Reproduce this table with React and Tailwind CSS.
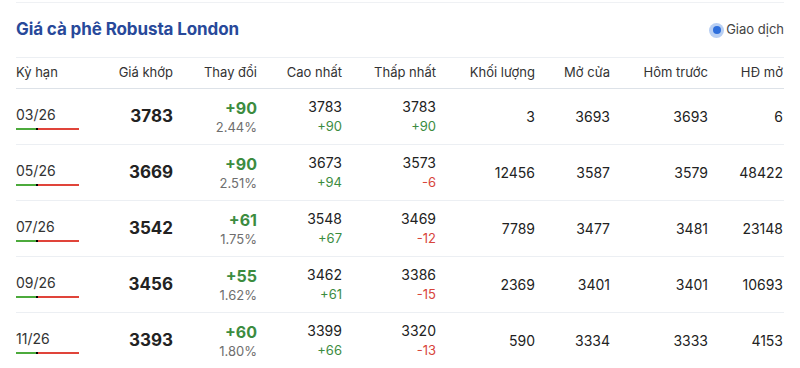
import React from 'react';

const rows = [
  { term: '03/26', price: 3783, chg: '+90', pct: '2.44%', high: 3783, highChg: '+90', low: 3783, lowChg: '+90', vol: 3, open: 3693, prev: 3693, oi: 6 },
  { term: '05/26', price: 3669, chg: '+90', pct: '2.51%', high: 3673, highChg: '+94', low: 3573, lowChg: '-6', vol: 12456, open: 3587, prev: 3579, oi: 48422 },
  { term: '07/26', price: 3542, chg: '+61', pct: '1.75%', high: 3548, highChg: '+67', low: 3469, lowChg: '-12', vol: 7789, open: 3477, prev: 3481, oi: 23148 },
  { term: '09/26', price: 3456, chg: '+55', pct: '1.62%', high: 3462, highChg: '+61', low: 3386, lowChg: '-15', vol: 2369, open: 3401, prev: 3401, oi: 10693 },
  { term: '11/26', price: 3393, chg: '+60', pct: '1.80%', high: 3399, highChg: '+66', low: 3320, lowChg: '-13', vol: 590, open: 3334, prev: 3333, oi: 4153 },
];

const cols = 'grid grid-cols-[84px_73px_84px_85px_94px_99px_75px_98px_75px]';

const SubChange = ({ value }) => (
  <span className={`text-[13px] ${value.startsWith('-') ? 'text-[#d8453b]' : 'text-[#3c8c3f]'}`}>{value}</span>
);

export default function App() {
  return (
    <div className="w-[800px] h-[368px] overflow-hidden bg-white px-4 pt-[2px] text-[#222]" style={{ fontFamily: 'Inter, "Noto Sans", sans-serif' }}>
      <div className="border-t border-[#eff1f4]">
        <div className="flex items-center justify-between h-[54px]">
          <h1 className="text-[17px] font-bold text-[#28499a] tracking-[-0.1px]">Giá cà phê Robusta London</h1>
          <div className="flex items-center gap-[2px] text-[13px] text-[#444]">
            <span className="w-[15px] h-[15px] rounded-full bg-[#b8cff3] flex items-center justify-center">
              <span className="w-[8px] h-[8px] rounded-full bg-[#2e6fdc]"></span>
            </span>
            <span>Giao dịch</span>
          </div>
        </div>

        <div className={`${cols} h-[32px] items-center border-t border-[#eceff3] border-b border-b-[#dde2e8] text-[13px] text-[#333]`}>
          <div>Kỳ hạn</div>
          <div className="text-right">Giá khớp</div>
          <div className="text-right">Thay đổi</div>
          <div className="text-right">Cao nhất</div>
          <div className="text-right">Thấp nhất</div>
          <div className="text-right">Khối lượng</div>
          <div className="text-right">Mở cửa</div>
          <div className="text-right">Hôm trước</div>
          <div className="text-right">HĐ mở</div>
        </div>

        {rows.map((r) => (
          <div key={r.term} className={`${cols} h-[56px] items-center border-b border-[#eceff3] text-[14px]`}>
            <div className="flex flex-col pt-[2px]">
              <span className="text-[14px] leading-[18px] text-[#333]">{r.term}</span>
              <div className="flex items-center w-[63px] h-[2px] mt-[4px]">
                <span className="w-[20px] h-[2px] bg-[#4caa3c]"></span>
                <span className="w-[2px] h-[2px] bg-black"></span>
                <span className="flex-1 h-[2px] bg-[#e0443a]"></span>
              </div>
            </div>
            <div className="text-right text-[17px] font-bold text-[#222]">{r.price}</div>
            <div className="flex flex-col items-end">
              <span className="text-[16px] font-bold leading-[20px] text-[#3c8c3f]">{r.chg}</span>
              <span className="text-[13px] leading-[18px] text-[#6e6e6e]">{r.pct}</span>
            </div>
            <div className="flex flex-col items-end">
              <span className="leading-[20px]">{r.high}</span>
              <SubChange value={r.highChg} />
            </div>
            <div className="flex flex-col items-end">
              <span className="leading-[20px]">{r.low}</span>
              <SubChange value={r.lowChg} />
            </div>
            <div className="text-right">{r.vol}</div>
            <div className="text-right">{r.open}</div>
            <div className="text-right">{r.prev}</div>
            <div className="text-right">{r.oi}</div>
          </div>
        ))}
      </div>
    </div>
  );
}
